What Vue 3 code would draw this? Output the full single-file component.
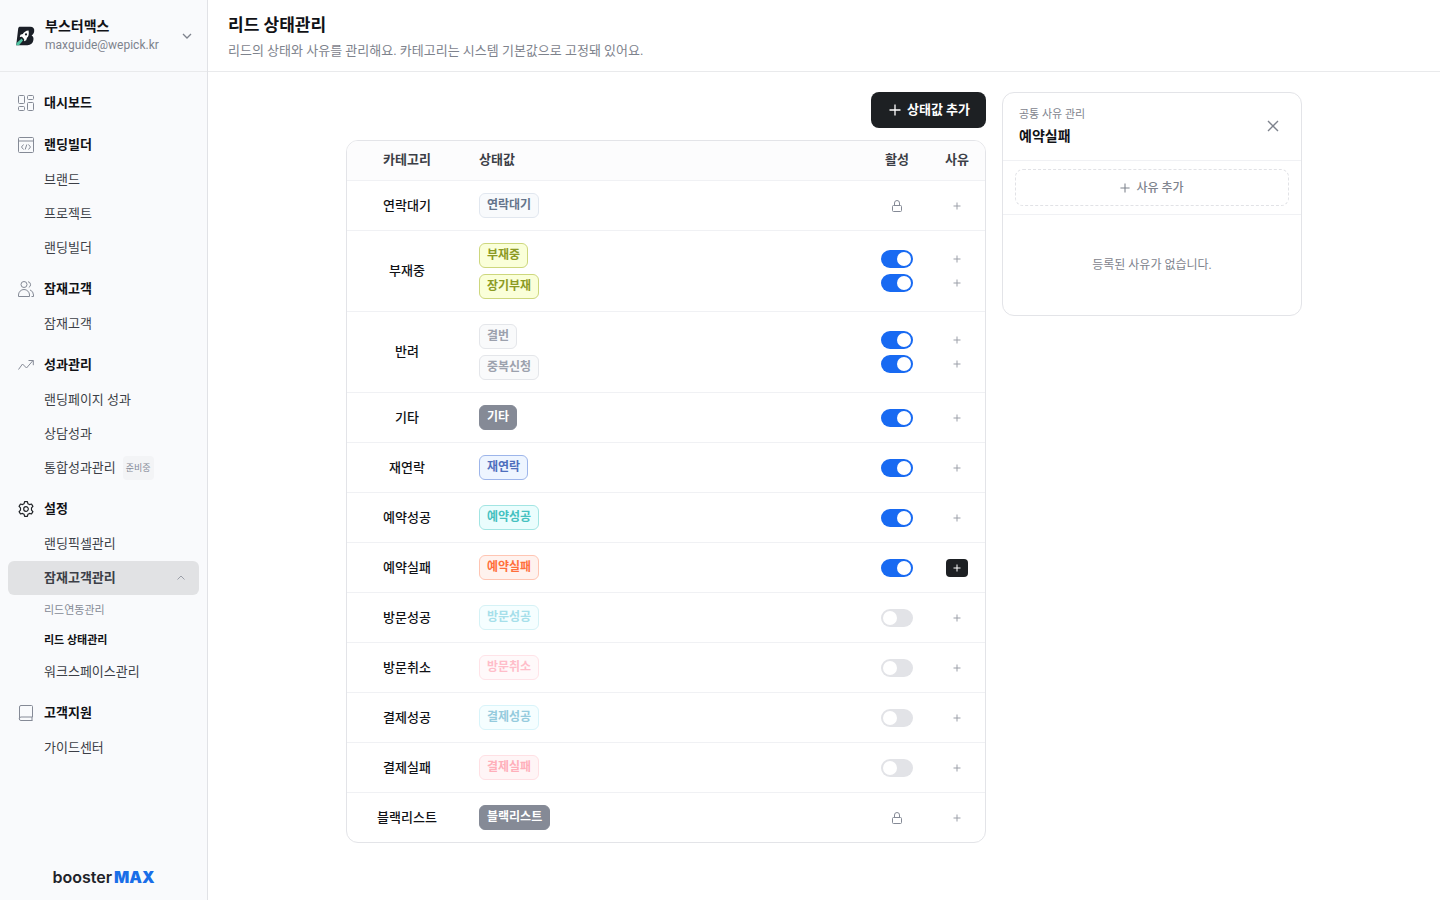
<template>
    <div class="layout">
        <aside class="sidebar">
            <button type="button" class="workspace">
                <svg class="workspace-logo" viewBox="0 0 20 20" aria-hidden="true">
                    <path d="M5.2 0.8H15.2C18.2 0.8 19.6 2.4 19.2 5.2C18.9 7.2 18 8.6 16.6 9.4C18.2 10.2 18.8 11.8 18.4 14C17.9 17.4 15.8 19.2 12.4 19.2H1.2L3.2 2.6C3.4 1.4 4 .8 5.2 .8Z" fill="#1b1f27" />
                    <path d="M13.6 4.4C10.8 4.6 8.8 6 7.8 8L5.4 8.8L4.8 11L7 10.8L9.2 13.2L9 15.2L11.2 14.2L12 11.8C13.6 10.4 14.2 7.8 13.6 4.4Z" fill="#fff" />
                    <circle cx="11" cy="8.4" r="1.1" fill="#1b1f27" />
                    <path d="M6.6 12.6L8 14.4L4 19.2H1.2L1.6 17Z" fill="#4fc3a1" />
                </svg>
                <span class="workspace-info">
                    <strong>부스터맥스</strong>
                    <span>maxguide@wepick.kr</span>
                </span>
                <svg class="chevron" viewBox="0 0 10 10" aria-hidden="true"><path d="M1 3l4 4 4-4" /></svg>
            </button>

            <nav class="menu" aria-label="메뉴">
                <section v-for="group in menu" :key="group.title" class="menu-group">
                    <a href="#" class="menu-title" :class="{ current: group.current }">
                        <svg class="menu-icon" viewBox="0 0 16 16" aria-hidden="true">
                            <path v-for="d in icons[group.icon]" :key="d" :d="d" />
                        </svg>
                        {{ group.title }}
                    </a>
                    <template v-for="item in group.items" :key="item.label">
                        <a href="#" class="menu-item" :class="{ open: item.children }">
                            {{ item.label }}
                            <span v-if="item.badge" class="menu-badge">{{ item.badge }}</span>
                            <svg v-if="item.children" class="menu-arrow" viewBox="0 0 8 8" aria-hidden="true"><path d="M.5 5.5L4 2l3.500 3.500" /></svg>
                        </a>
                        <a v-for="child in item.children" :key="child.label" href="#" class="menu-child" :class="{ active: child.active }">{{ child.label }}</a>
                    </template>
                </section>
            </nav>

            <div class="brand">booster<b>MAX</b></div>
        </aside>

        <div class="page">
            <header class="page-header">
                <h1>리드 상태관리</h1>
                <p>리드의 상태와 사유를 관리해요. 카테고리는 시스템 기본값으로 고정돼 있어요.</p>
            </header>

            <main class="content">
                <div class="status-list">
                    <button type="button" class="add-status">
                        <svg class="icon-plus" viewBox="0 0 12 12" aria-hidden="true"><path d="M6 .5v11M.5 6h11" /></svg>
                        상태값 추가
                    </button>
                    <div class="card">
                        <table>
                            <thead>
                                <tr>
                                    <th class="col-category">카테고리</th>
                                    <th class="col-status">상태값</th>
                                    <th class="col-active">활성</th>
                                    <th class="col-reason">사유</th>
                                </tr>
                            </thead>
                            <tbody>
                                <tr v-for="row in rows" :key="row.category">
                                    <td class="col-category">{{ row.category }}</td>
                                    <td class="col-status">
                                        <div class="stack tags">
                                            <span v-for="s in row.statuses" :key="s.name" class="tag" :class="s.color">{{ s.name }}</span>
                                        </div>
                                    </td>
                                    <td class="col-active">
                                        <div class="stack">
                                            <template v-for="s in row.statuses" :key="s.name">
                                                <svg v-if="row.locked" class="icon-lock" viewBox="0 0 12 12" role="img" aria-label="고정">
                                                    <path d="M2.500 5.500h7a1 1 0 0 1 1 1v4a1 1 0 0 1-1 1h-7a1 1 0 0 1-1-1v-4a1 1 0 0 1 1-1zM3.500 5.500V3a2.500 2.500 0 0 1 5 0v2.500" />
                                                </svg>
                                                <input v-else v-model="s.active" type="checkbox" class="toggle" :aria-label="s.name + ' 활성'" />
                                            </template>
                                        </div>
                                    </td>
                                    <td class="col-reason">
                                        <div class="stack">
                                            <button
                                                v-for="s in row.statuses"
                                                :key="s.name"
                                                type="button"
                                                class="reason"
                                                :class="{ selected: selected === s.name }"
                                                :aria-label="s.name + ' 사유'"
                                                @click="selected = s.name"
                                            >
                                                <svg viewBox="0 0 8 8" aria-hidden="true"><path d="M4 .5v7M.5 4h7" /></svg>
                                            </button>
                                        </div>
                                    </td>
                                </tr>
                            </tbody>
                        </table>
                    </div>
                </div>

                <section v-if="selected" class="card panel">
                    <div class="panel-header">
                        <div>
                            <p>공통 사유 관리</p>
                            <h2>{{ selected }}</h2>
                        </div>
                        <button type="button" class="close" aria-label="닫기" @click="selected = ''">
                            <svg viewBox="0 0 12 12" aria-hidden="true"><path d="M1 1l10 10M11 1L1 11" /></svg>
                        </button>
                    </div>
                    <div class="panel-add">
                        <button type="button" class="add-reason">
                            <svg class="icon-plus small" viewBox="0 0 12 12" aria-hidden="true"><path d="M6 .5v11M.5 6h11" /></svg>
                            사유 추가
                        </button>
                    </div>
                    <p class="empty">등록된 사유가 없습니다.</p>
                </section>
            </main>
        </div>
    </div>
</template>

<script setup>
import { ref } from 'vue'

const selected = ref('예약실패')

const icons = {
    dashboard: [
        'M1.500 .5h4a1 1 0 0 1 1 1v6a1 1 0 0 1-1 1h-4a1 1 0 0 1-1-1v-6a1 1 0 0 1 1-1z',
        'M10.500 .5h4a1 1 0 0 1 1 1v2a1 1 0 0 1-1 1h-4a1 1 0 0 1-1-1v-2a1 1 0 0 1 1-1z',
        'M1.500 11.500h4a1 1 0 0 1 1 1v2a1 1 0 0 1-1 1h-4a1 1 0 0 1-1-1v-2a1 1 0 0 1 1-1z',
        'M10.500 7.500h4a1 1 0 0 1 1 1v6a1 1 0 0 1-1 1h-4a1 1 0 0 1-1-1v-6a1 1 0 0 1 1-1z'
    ],
    builder: [
        'M1.500 .5h13a1 1 0 0 1 1 1v13a1 1 0 0 1-1 1h-13a1 1 0 0 1-1-1v-13a1 1 0 0 1 1-1z',
        'M.5 4h15',
        'M5.500 7.500L3.500 10l2 2.500M10.500 7.500l2 2.500-2 2.500M8.800 7.500l-1.600 5'
    ],
    users: [
        'M6 .5a3 3 0 1 1 0 6 3 3 0 0 1 0-6z',
        'M.5 15.500v-1.500a5.500 5.500 0 0 1 11 0v1.500z',
        'M10 .7a3 3 0 0 1 .8 5.700M12 8.900a5.500 5.500 0 0 1 3.500 5.100v1.500h-2'
    ],
    trend: ['M.5 12.500l4-5.500 4 4 6.500-7.500M10.500 3.500h4.800v4.700'],
    gear: [
        'M6.600 .7h2.800l.5 2 1.600 .9 2-.6 1.400 2.400-1.400 1.500v2.200l1.400 1.500-1.400 2.400-2-.6-1.600 .9-.5 2H6.600l-.5-2-1.600-.9-2 .6-1.400-2.400 1.400-1.500V6.900L1.100 5.400 2.500 3l2 .6 1.600-.9z',
        'M8 5.700a2.300 2.300 0 1 1 0 4.600 2.300 2.300 0 0 1 0-4.600z'
    ],
    book: [
        'M3 .5h10.500a1 1 0 0 1 1 1v10.500H3a1.750 1.750 0 0 0 0 3.500h11.500M14 12v3.500',
        'M1.500 13.700V2a1.500 1.500 0 0 1 1.500-1.500'
    ]
}

const menu = [
    { title: '대시보드', icon: 'dashboard', items: [] },
    { title: '랜딩빌더', icon: 'builder', items: [{ label: '브랜드' }, { label: '프로젝트' }, { label: '랜딩빌더' }] },
    { title: '잠재고객', icon: 'users', items: [{ label: '잠재고객' }] },
    {
        title: '성과관리',
        icon: 'trend',
        items: [{ label: '랜딩페이지 성과' }, { label: '상담성과' }, { label: '통합성과관리', badge: '준비중' }]
    },
    {
        title: '설정',
        icon: 'gear',
        current: true,
        items: [
            { label: '랜딩픽셀관리' },
            { label: '잠재고객관리', children: [{ label: '리드연동관리' }, { label: '리드 상태관리', active: true }] },
            { label: '워크스페이스관리' }
        ]
    },
    { title: '고객지원', icon: 'book', items: [{ label: '가이드센터' }] }
]

const rows = ref([
    { category: '연락대기', locked: true, statuses: [{ name: '연락대기', color: 'slate' }] },
    {
        category: '부재중',
        statuses: [
            { name: '부재중', color: 'lime', active: true },
            { name: '장기부재', color: 'lime', active: true }
        ]
    },
    {
        category: '반려',
        statuses: [
            { name: '결번', color: 'gray', active: true },
            { name: '중복신청', color: 'gray', active: true }
        ]
    },
    { category: '기타', statuses: [{ name: '기타', color: 'dark', active: true }] },
    { category: '재연락', statuses: [{ name: '재연락', color: 'blue', active: true }] },
    { category: '예약성공', statuses: [{ name: '예약성공', color: 'teal', active: true }] },
    { category: '예약실패', statuses: [{ name: '예약실패', color: 'orange', active: true }] },
    { category: '방문성공', statuses: [{ name: '방문성공', color: 'cyan', active: false }] },
    { category: '방문취소', statuses: [{ name: '방문취소', color: 'pink', active: false }] },
    { category: '결제성공', statuses: [{ name: '결제성공', color: 'sky', active: false }] },
    { category: '결제실패', statuses: [{ name: '결제실패', color: 'rose', active: false }] },
    { category: '블랙리스트', locked: true, statuses: [{ name: '블랙리스트', color: 'dark' }] }
])
</script>

<style>
body {
    margin: 0;
    background: #fff;
}
</style>

<style scoped>
.layout {
    display: flex;
    min-height: 100vh;
    font-family: Roboto, "Noto Sans CJK KR", sans-serif;
    font-size: 13px;
    line-height: 20px;
    color: #111216;
}

.layout * {
    box-sizing: border-box;
}

h1,
h2,
p {
    margin: 0;
}

a {
    color: inherit;
    text-decoration: none;
}

button {
    border: none;
    padding: 0;
    background: none;
    font: inherit;
    color: inherit;
    cursor: pointer;
}

svg {
    flex: none;
    fill: none;
    stroke: currentColor;
}

.sidebar {
    width: 208px;
    flex: none;
    display: flex;
    flex-direction: column;
    background: #f9fafc;
    border-right: 1px solid #e1e2e6;
}

.workspace {
    display: flex;
    align-items: center;
    height: 72px;
    padding: 0 15px;
    gap: 10px;
    border-bottom: 1px solid #e9eaec;
    text-align: left;
}

.workspace-logo {
    width: 20px;
    height: 20px;
    stroke: none;
}

.workspace-info {
    flex: 1;
    display: flex;
    flex-direction: column;
    padding-bottom: 2px;
    font-size: 12px;
    line-height: 18px;
    color: #7e838d;
}

.workspace-info strong {
    font-size: 14px;
    line-height: 20px;
    font-weight: 700;
    color: #111216;
}

.chevron {
    width: 10px;
    height: 10px;
    color: #7e838d;
    stroke-width: 1.3;
}

.menu {
    display: flex;
    flex-direction: column;
    gap: 6px;
    padding: 13px 8px;
}

.menu-group {
    display: flex;
    flex-direction: column;
}

.menu-title {
    display: flex;
    align-items: center;
    gap: 10px;
    height: 36px;
    padding-left: 10px;
    font-weight: 700;
}

.menu-icon {
    width: 16px;
    height: 16px;
    color: #858a96;
    stroke-linejoin: round;
}

.current .menu-icon {
    color: #1f2226;
    stroke-width: 1.2;
}

.menu-item {
    display: flex;
    align-items: center;
    height: 34px;
    padding: 0 14px 0 36px;
    border-radius: 6px;
    color: #3c3f47;
}

.menu-item.open {
    background: #e1e2e4;
    font-weight: 700;
}

.menu-badge {
    margin-left: 7px;
    padding: 2px 3px;
    border-radius: 4px;
    background: #f3f4f6;
    font-size: 9px;
    color: #858a96;
}

.menu-arrow {
    width: 8px;
    height: 8px;
    margin-left: auto;
    color: #9b9fa8;
}

.menu-child {
    padding: 6px 0 4px 36px;
    font-size: 11px;
    color: #858a96;
}

.menu-child.active {
    font-weight: 700;
    color: #111216;
}

.brand {
    margin-top: auto;
    padding-bottom: 13px;
    text-align: center;
    font-family: Inter, sans-serif;
    font-size: 16px;
    font-weight: 600;
    color: #1f2329;
}

.brand b {
    margin-left: 2px;
    font-weight: 900;
    color: #1a6ee8;
}

.page {
    flex: 1;
    min-width: 0;
}

.page-header {
    height: 72px;
    padding: 12px 20px 0;
    border-bottom: 1px solid #e9eaec;
}

.page-header h1 {
    font-size: 17px;
    line-height: 26px;
    font-weight: 700;
}

.page-header p {
    line-height: 26px;
    color: #7e838d;
}

.content {
    display: flex;
    align-items: flex-start;
    gap: 16px;
    max-width: 956px;
    margin: 0 auto;
    padding: 20px 0;
}

.status-list {
    flex: 1;
    display: flex;
    flex-direction: column;
    align-items: flex-end;
    gap: 12px;
}

.add-status {
    display: flex;
    align-items: center;
    gap: 6px;
    height: 36px;
    padding: 0 16px 0 18px;
    border-radius: 8px;
    background: #1d2023;
    color: #fff;
    font-weight: 700;
}

.icon-plus {
    width: 12px;
    height: 12px;
    stroke-width: 1.3;
}

.icon-plus.small {
    width: 10px;
    height: 10px;
}

.card {
    border: 1px solid #e3e4e8;
    border-radius: 12px;
    background: #fff;
    overflow: hidden;
}

.status-list .card {
    width: 100%;
}

table {
    width: 100%;
    table-layout: fixed;
    border-spacing: 0;
}

th {
    height: 40px;
    padding: 0 0 2px;
    border-bottom: 1px solid #f0f1f4;
    background: #fcfcfd;
    font-weight: 700;
    color: #3c3f47;
}

td {
    padding: 12px 0;
    border-bottom: 1px solid #f0f1f4;
    text-align: center;
    font-weight: 500;
}

tbody tr:last-child td {
    border-bottom: none;
}

.col-category {
    width: 120px;
}

.col-status {
    padding-left: 12px;
    text-align: left;
}

.col-active {
    width: 64px;
}

.col-reason {
    width: 56px;
}

.stack {
    display: flex;
    flex-direction: column;
    align-items: center;
    gap: 6px;
}

.tags {
    align-items: flex-start;
}

.tag {
    height: 25px;
    padding: 0 7px;
    border: 1px solid;
    border-radius: 6px;
    font-size: 12px;
    line-height: 23px;
    font-weight: 700;
}

.slate {
    background: #f8fafc;
    border-color: #e1e7ef;
    color: #64748b;
}

.lime {
    background: #faffd9;
    border-color: #cdd77d;
    color: #8c9a23;
}

.gray {
    background: #f9fafb;
    border-color: #e4e6ea;
    color: #9ca1ad;
}

.dark {
    background: #858a96;
    border-color: #858a96;
    color: #fff;
}

.blue {
    background: #eef5ff;
    border-color: #9db5ea;
    color: #4f6fbd;
}

.teal {
    background: #eafdfd;
    border-color: #a2e5e3;
    color: #45c1c0;
}

.orange {
    background: #fff2ee;
    border-color: #ffc5b3;
    color: #ff6f3c;
}

.cyan {
    background: #f5feff;
    border-color: #d5f2f6;
    color: #a6dfea;
}

.pink {
    background: #fff9fa;
    border-color: #ffe3e8;
    color: #ffbdc9;
}

.sky {
    background: #f5feff;
    border-color: #d8f4fa;
    color: #95cbdd;
}

.rose {
    background: #fff5f6;
    border-color: #ffe0e4;
    color: #ffafba;
}

.icon-lock {
    width: 12px;
    height: 12px;
    color: #858a96;
}

.toggle {
    appearance: none;
    width: 32px;
    height: 18px;
    margin: 0;
    padding: 2px;
    border-radius: 9px;
    background: #e2e3e7;
    cursor: pointer;
}

.toggle::before {
    content: "";
    display: block;
    width: 14px;
    height: 14px;
    border-radius: 50%;
    background: #fff;
}

.toggle:checked {
    background: #186af2;
}

.toggle:checked::before {
    margin-left: auto;
}

.reason {
    display: flex;
    align-items: center;
    justify-content: center;
    width: 22px;
    height: 18px;
    border-radius: 4px;
    color: #9b9fa8;
}

.reason svg {
    width: 8px;
    height: 8px;
}

.reason.selected {
    background: #1d2023;
    color: #fff;
}

.panel {
    width: 300px;
    flex: none;
}

.panel-header {
    display: flex;
    align-items: center;
    justify-content: space-between;
    height: 68px;
    padding: 0 15px 2px 16px;
    border-bottom: 1px solid #f0f1f4;
}

.panel-header p {
    font-size: 11px;
    line-height: 20px;
    color: #7e838d;
}

.panel-header h2 {
    font-size: 14px;
    line-height: 22px;
    font-weight: 700;
}

.close {
    display: flex;
    padding: 7px;
    color: #7e838d;
}

.close svg {
    width: 12px;
    height: 12px;
    stroke-width: 1.4;
}

.panel-add {
    padding: 8px 12px;
    border-bottom: 1px solid #f0f1f4;
}

.add-reason {
    display: flex;
    align-items: center;
    justify-content: center;
    gap: 6px;
    width: 100%;
    height: 37px;
    border: 1px dashed #e1e2e6;
    border-radius: 8px;
    font-size: 12px;
    font-weight: 500;
    color: #7e838d;
}

.empty {
    padding: 40px 16px;
    text-align: center;
    font-size: 12px;
    color: #7e838d;
}
</style>
